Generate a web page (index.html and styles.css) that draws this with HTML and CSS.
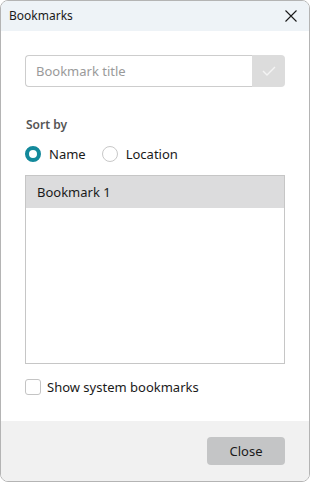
FILE: index.html
```html
<!DOCTYPE html>
<html>
<head>
<meta charset="utf-8">
<link rel="stylesheet" href="styles.css">
</head>
<body>
<div class="window">
  <div class="titlebar">
    <span class="title">Bookmarks</span>
    <svg class="close-x" width="12" height="12" viewBox="0 0 12 12"><path d="M0.5 0.5L11.5 11.5M11.5 0.5L0.5 11.5" stroke="#1a1a1a" stroke-width="1.1" fill="none"/></svg>
  </div>
  <div class="content">
    <div class="input-row">
      <div class="input">Bookmark title</div>
      <div class="ok-btn"><svg width="14" height="10" viewBox="0 0 14 10"><path d="M1 5L5 9L13 1" stroke="#f4f4f4" stroke-width="1.4" fill="none"/></svg></div>
    </div>
    <div class="sort-label">Sort by</div>
    <div class="radios">
      <label class="radio"><span class="dot checked"></span>Name</label>
      <label class="radio"><span class="dot"></span>Location</label>
    </div>
    <div class="list">
      <div class="item selected">Bookmark 1</div>
    </div>
    <label class="check"><span class="box"></span>Show system bookmarks</label>
  </div>
  <div class="footer">
    <div class="btn">Close</div>
  </div>
</div>
</body>
</html>
```
FILE: styles.css
```css
html, body { margin: 0; padding: 0; background: #fff; }
body { font-family: "Noto Sans", "Segoe UI", sans-serif; color: #1a1a1a; }
.window {
  width: 310px; height: 482px; box-sizing: border-box;
  border: 1px solid #b4b4b4; border-radius: 8px;
  display: flex; flex-direction: column; overflow: hidden;
}
.titlebar {
  height: 30px; background: #eef3f7; flex: none;
  display: flex; align-items: center; justify-content: space-between;
  padding: 0 12px 0 8px;
}
.title { font-size: 12px; margin-top: -1px; }
.close-x { display: block; }
.content { flex: 1; padding: 24px 24px 0 24px; background: #fff; }
.input-row { display: flex; height: 32px; }
.input {
  flex: 1; border: 1px solid #cdcdcd; border-right: none; border-radius: 4px 0 0 4px;
  font-size: 13px; color: #9a9a9a; padding-left: 10px; line-height: 30px;
}
.ok-btn {
  width: 33px; background: #dcdcdc; border-radius: 0 4px 4px 0;
  display: flex; align-items: center; justify-content: center;
}
.sort-label { font-size: 12px; color: #555; margin-top: 29px; font-weight: 600; line-height: 17px; padding-left: 1px; }
.radios { display: flex; gap: 16px; margin-top: 11px; height: 20px; align-items: center; }
.radio { display: flex; align-items: center; font-size: 13px; gap: 8px; }
.dot { width: 16px; height: 16px; box-sizing: border-box; border-radius: 50%; border: 1px solid #c8c8c8; background: #fff; }
.dot.checked { border: 4px solid #13899b; }
.list {
  margin-top: 11px; height: 189px; box-sizing: border-box; border: 1px solid #c6c6c6;
}
.item { height: 32px; line-height: 32px; padding-left: 11px; font-size: 13px; }
.item.selected { background: #dcdcdd; }
.check { display: flex; align-items: center; gap: 6px; margin-top: 14px; font-size: 13px; height: 18px; }
.box { width: 16px; height: 16px; box-sizing: border-box; border: 1px solid #c4c4c4; border-radius: 3px; }
.footer {
  height: 60px; flex: none; background: #f1f1f1;
  display: flex; align-items: center; justify-content: flex-end; padding-right: 24px;
}
.btn {
  width: 78px; height: 28px; border-radius: 4px; background: #c4c5c6;
  font-size: 13px; line-height: 28px; text-align: center;
}
```
